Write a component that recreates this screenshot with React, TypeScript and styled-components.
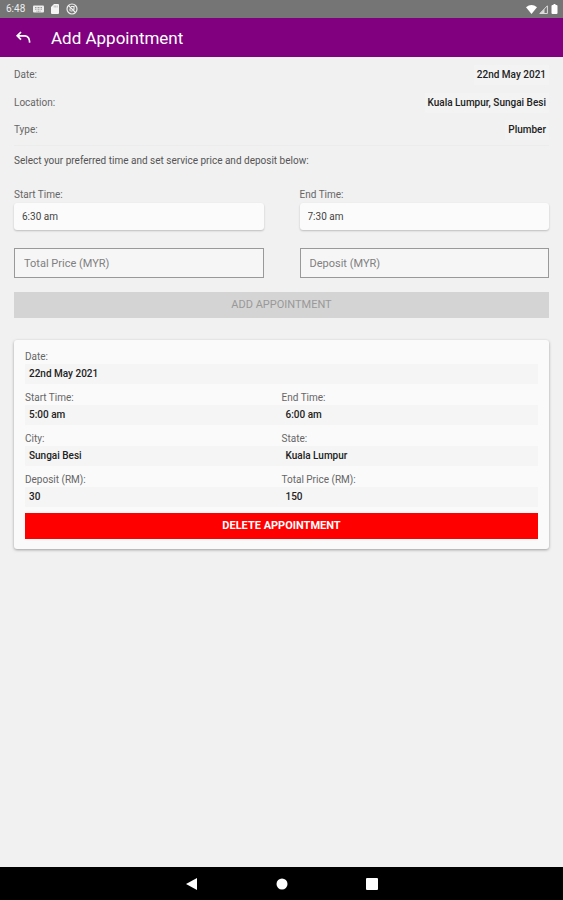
import React, { useState } from "react";
import styled, { createGlobalStyle } from "styled-components";

const GlobalStyle = createGlobalStyle`
  *, *::before, *::after { box-sizing: border-box; }
  body {
    margin: 0;
    background: #f1f1f1;
    font-family: Roboto, "Liberation Sans", sans-serif;
    font-size: 10px;
    line-height: 14px;
    color: #666;
  }
  button, input { font: inherit; margin: 0; }
  dl, dd, h1, p { margin: 0; }
`;

const Screen = styled.div`
  display: flex;
  flex-direction: column;
  min-height: 100vh;
`;

const StatusBar = styled.div`
  display: flex;
  align-items: center;
  justify-content: space-between;
  height: 18px;
  padding: 0 4px 0 6px;
  background: #757575;
  color: #eee;
`;

const StatusGroup = styled.div<{ $gap: number }>`
  display: flex;
  align-items: center;
  gap: ${(p) => p.$gap}px;

  svg { display: block; }
`;

const Clock = styled.span`
  margin-right: 2px;
`;

const Header = styled.header`
  display: flex;
  align-items: center;
  gap: 18px;
  height: 39px;
  padding: 0 14px;
  background: #800080;
  color: #fff;
`;

const BackButton = styled.button`
  display: flex;
  padding: 0;
  border: 0;
  background: none;
  color: inherit;
`;

const Title = styled.h1`
  font-size: 17px;
  font-weight: 400;
  line-height: 24px;
`;

const Content = styled.main`
  flex: 1;
  padding: 4px 14px 24px;
`;

const Summary = styled.dl`
  padding-bottom: 2px;
  border-bottom: 1px solid #ececec;
`;

const SummaryRow = styled.div`
  display: flex;
  align-items: center;
  justify-content: space-between;
  height: 28px;

  & + & { height: 27px; }
`;

const SummaryValue = styled.dd`
  padding: 3px;
  background: #f3f3f3;
  color: #222;
  font-weight: 500;
`;

const Hint = styled.p`
  padding: 8px 0 20px;
  color: #555;
`;

const FormGrid = styled.form`
  display: grid;
  grid-template-columns: 1fr 1fr;
  column-gap: 36px;
`;

const Field = styled.label`
  display: block;
`;

const TimeInput = styled.input`
  display: block;
  width: 100%;
  height: 27px;
  margin: 1px 0 18px;
  padding: 0 8px;
  border: 0;
  border-radius: 3px;
  background: #fbfbfb;
  box-shadow: 0 1px 2px rgba(0, 0, 0, 0.22);
  color: #444;
`;

const PriceInput = styled.input`
  display: block;
  width: 100%;
  height: 30px;
  padding: 1px 9px 0;
  border: 1px solid #999;
  border-radius: 0;
  background: #f6f6f6;
  color: #444;
  font-size: 11px;

  &::placeholder { color: #808080; opacity: 1; }
`;

const ActionButton = styled.button<{ $tone: "muted" | "danger" }>`
  display: block;
  width: 100%;
  height: 26px;
  padding: 0;
  border: 0;
  background: ${(p) => (p.$tone === "danger" ? "#ff0000" : "#d4d4d4")};
  color: ${(p) => (p.$tone === "danger" ? "#fff" : "#999")};
  font-size: 11px;
  font-weight: ${(p) => (p.$tone === "danger" ? 700 : 400)};
  text-transform: uppercase;
`;

const SubmitRow = styled.div`
  grid-column: 1 / -1;
  margin-top: 14px;
`;

const Card = styled.article`
  margin-top: 22px;
  padding: 10px 11px;
  border-radius: 3px;
  background: #fafafa;
  box-shadow: 0 1px 3px rgba(0, 0, 0, 0.35);
`;

const Details = styled.dl`
  display: grid;
  grid-template-columns: 1fr 1fr;
  row-gap: 7px;
  margin-bottom: 6px;
`;

const Detail = styled.div<{ $wide?: boolean }>`
  grid-column: ${(p) => (p.$wide ? "1 / -1" : "auto")};
`;

const DetailValue = styled.dd`
  padding: 3px 4px;
  background: #f5f5f5;
  color: #222;
  font-weight: 500;
`;

const NavBar = styled.nav`
  display: flex;
  align-items: center;
  justify-content: center;
  gap: 76px;
  height: 33px;
  background: #000;
`;

const NavButton = styled.button`
  display: flex;
  padding: 0;
  border: 0;
  background: none;
  color: #fff;
`;

const summary = [
  ["Date:", "22nd May 2021"],
  ["Location:", "Kuala Lumpur, Sungai Besi"],
  ["Type:", "Plumber"],
];

const details = [
  ["Date:", "22nd May 2021"],
  ["Start Time:", "5:00 am"],
  ["End Time:", "6:00 am"],
  ["City:", "Sungai Besi"],
  ["State:", "Kuala Lumpur"],
  ["Deposit (RM):", "30"],
  ["Total Price (RM):", "150"],
];

export default function App() {
  const [start, setStart] = useState("6:30 am");
  const [end, setEnd] = useState("7:30 am");
  const [price, setPrice] = useState("");
  const [deposit, setDeposit] = useState("");

  return (
    <Screen>
      <GlobalStyle />
      <StatusBar>
        <StatusGroup $gap={6}>
          <Clock>6:48</Clock>
          <svg width="11" height="8" viewBox="0 0 11 8" aria-hidden="true">
            <rect y="0.5" width="11" height="7" rx="1" fill="#eee" />
            <path d="M2 2.5h7M2 4.2h7M3.5 6.2h4" stroke="#757575" strokeWidth="0.7" strokeDasharray="1 0.5" />
          </svg>
          <svg width="10" height="10" viewBox="0 0 10 10" aria-hidden="true">
            <path d="M4 0h4q1 0 1 1v8q0 1-1 1H2q-1 0-1-1V3z" fill="#f5f5f5" />
            <path d="M4.2 1.5v2M5.7 1.5v2M7.2 1.5v2" stroke="#999" strokeWidth="0.6" />
          </svg>
          <svg width="12" height="12" viewBox="0 0 12 12" fill="none" stroke="#eee" aria-hidden="true">
            <circle cx="6" cy="6" r="5" strokeWidth="1.2" />
            <path d="M3 3l6 6M4 7.8V5.5M5 3.5h3v3.2M4.5 8h2" strokeWidth="1.2" />
          </svg>
        </StatusGroup>
        <StatusGroup $gap={2}>
          <svg width="11" height="9" viewBox="0 0 11 9" aria-hidden="true">
            <path d="M0 2.2Q5.5-2 11 2.2L5.5 9z" fill="#fff" />
          </svg>
          <svg width="9" height="9" viewBox="0 0 9 9" aria-hidden="true">
            <path d="M8.4.8v7.7H.8z" fill="none" stroke="#ddd" />
            <path d="M5.5 4v4.5H1z" fill="#ddd" />
          </svg>
          <svg width="9" height="10" viewBox="0 0 9 10" aria-hidden="true">
            <path d="M3.5 0h2v1h1q1 0 1 1v7q0 1-1 1h-4q-1 0-1-1V2q0-1 1-1h1z" fill="#fff" />
          </svg>
        </StatusGroup>
      </StatusBar>

      <Header>
        <BackButton type="button" aria-label="Back">
          <svg width="19" height="18" viewBox="0 0 19 18" fill="none" stroke="currentColor" strokeWidth="1.7">
            <path d="M7 3L3.2 6.8L7 10.6M3.2 6.8h8q4.3.4 4.5 6.8" />
          </svg>
        </BackButton>
        <Title>Add Appointment</Title>
      </Header>

      <Content>
        <Summary>
          {summary.map(([label, value]) => (
            <SummaryRow key={label}>
              <dt>{label}</dt>
              <SummaryValue>{value}</SummaryValue>
            </SummaryRow>
          ))}
        </Summary>

        <Hint>Select your preferred time and set service price and deposit below:</Hint>

        <FormGrid onSubmit={(e) => e.preventDefault()}>
          <Field>
            Start Time:
            <TimeInput value={start} onChange={(e) => setStart(e.target.value)} />
          </Field>
          <Field>
            End Time:
            <TimeInput value={end} onChange={(e) => setEnd(e.target.value)} />
          </Field>
          <PriceInput
            aria-label="Total Price (MYR)"
            placeholder="Total Price (MYR)"
            inputMode="decimal"
            value={price}
            onChange={(e) => setPrice(e.target.value)}
          />
          <PriceInput
            aria-label="Deposit (MYR)"
            placeholder="Deposit (MYR)"
            inputMode="decimal"
            value={deposit}
            onChange={(e) => setDeposit(e.target.value)}
          />
          <SubmitRow>
            <ActionButton type="submit" $tone="muted" disabled={!price || !deposit}>
              Add Appointment
            </ActionButton>
          </SubmitRow>
        </FormGrid>

        <Card>
          <Details>
            {details.map(([label, value], i) => (
              <Detail key={label} $wide={i === 0}>
                <dt>{label}</dt>
                <DetailValue>{value}</DetailValue>
              </Detail>
            ))}
          </Details>
          <ActionButton type="button" $tone="danger">
            Delete Appointment
          </ActionButton>
        </Card>
      </Content>

      <NavBar aria-label="System">
        <NavButton type="button" aria-label="Back">
          <svg width="14" height="14" viewBox="0 0 14 14"><path d="M12 1v12L1 7z" fill="currentColor" /></svg>
        </NavButton>
        <NavButton type="button" aria-label="Home">
          <svg width="14" height="14" viewBox="0 0 14 14"><circle cx="7" cy="7" r="5.5" fill="currentColor" /></svg>
        </NavButton>
        <NavButton type="button" aria-label="Recent apps">
          <svg width="14" height="14" viewBox="0 0 14 14"><rect x="1" y="1" width="12" height="12" rx="1" fill="currentColor" /></svg>
        </NavButton>
      </NavBar>
    </Screen>
  );
}
